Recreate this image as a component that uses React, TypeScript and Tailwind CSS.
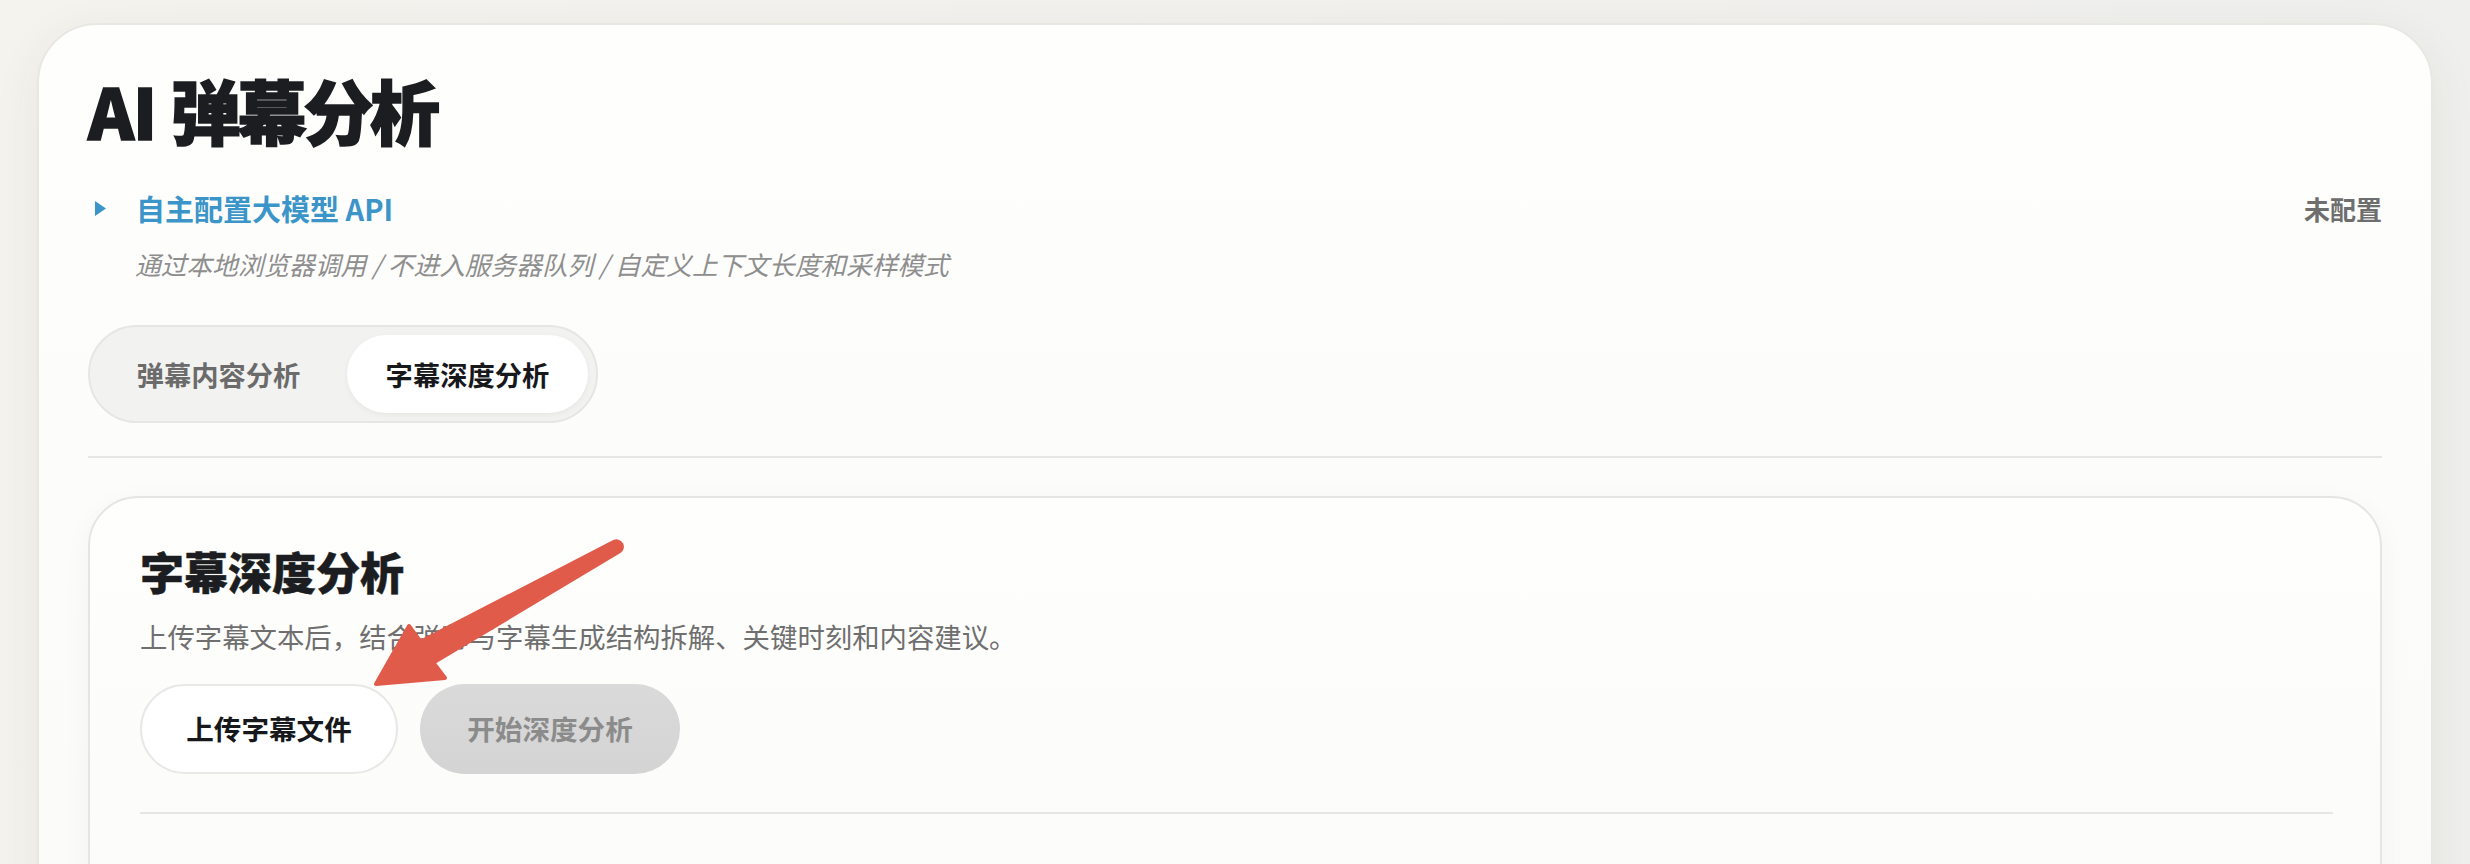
import React from 'react'

const tabs = ['弹幕内容分析', '字幕深度分析']

export default function App() {
  const active = 1

  return (
    <div className="relative min-h-screen bg-linear-to-r from-[#f5f3ee] to-[#efefed] px-[37px] pt-[23px] font-['Noto_Sans_CJK_SC','Noto_Sans',sans-serif]">
      <section className="rounded-[60px] border-2 border-[#e9e7e2] bg-linear-to-b from-[#fefefd] to-[#fafaf8] px-[49px] pt-[50px] pb-[120px] shadow-[0_12px_48px_rgba(60,50,30,0.07)]">
        <h1 className="text-[70px] leading-none font-black tracking-[-0.05em] text-[#1b1d21] [-webkit-text-stroke:1.5px_#1b1d21]">
          <span className="tracking-[-0.02em]">AI </span>弹幕分析
        </h1>

        <div className="mt-[43px] flex h-[40px] items-center justify-between">
          <button className="flex items-center gap-[30px] pl-[7px]">
            <svg width="11" height="15" viewBox="0 0 11 15">
              <polygon points="0,0 11,7.5 0,15" fill="#3b95c8" />
            </svg>
            <span className="text-[29px] leading-none font-bold text-[#3b95c8]">
              自主配置大模型 API
            </span>
          </button>
          <span className="text-[26px] font-bold text-[#6e6e6e]">未配置</span>
        </div>

        <p className="mt-[18px] pl-[47px] text-[25.7px] leading-[36px] text-[#8e8e8e] italic">
          通过本地浏览器调用 / 不进入服务器队列 / 自定义上下文长度和采样模式
        </p>

        <div className="mt-[43px] inline-flex gap-[8px] rounded-full border-2 border-[#e6e6e4] bg-[#f2f2f1] p-[8px]">
          {tabs.map((t, i) => (
            <button
              key={t}
              className={
                i === active
                  ? 'flex h-[78px] w-[241px] items-center justify-center rounded-full bg-white text-[27.3px] font-bold text-[#17181b] shadow-[0_2px_6px_rgba(0,0,0,0.05)]'
                  : 'flex h-[78px] w-[241px] items-center justify-center rounded-full text-[27.3px] font-bold text-[#6b6b6b]'
              }
            >
              {t}
            </button>
          ))}
        </div>

        <div className="mt-[33px] h-[2px] bg-[#e7e6e3]" />

        <div className="mt-[38px] rounded-[50px] border-2 border-[#e6e5e2] bg-linear-to-b from-[#fefefd] to-[#fbfbf9] pt-[51px] pr-[47px] pb-[120px] pl-[50px] shadow-[0_8px_30px_rgba(60,50,30,0.04)]">
          <h2 className="text-[44px] leading-none font-black text-[#1b1d21] [-webkit-text-stroke:0.5px_#1b1d21]">
            字幕深度分析
          </h2>
          <p className="mt-[23px] text-[27.4px] leading-[40px] text-[#6f6f6f]">
            上传字幕文本后，结合弹幕与字幕生成结构拆解、关键时刻和内容建议。
          </p>
          <div className="mt-[28px] flex gap-[22px]">
            <button className="h-[90px] w-[258px] rounded-full border-2 border-[#e8e8e6] bg-white text-[27.6px] font-bold text-[#17181b]">
              上传字幕文件
            </button>
            <button className="h-[90px] w-[260px] rounded-full bg-linear-to-b from-[#dadada] to-[#d4d4d4] text-[27.6px] font-bold text-[#8b8b8b]">
              开始深度分析
            </button>
          </div>
          <div className="mt-[38px] h-[2px] bg-[#e7e6e3]" />
        </div>
      </section>

      {/* annotation arrow */}
      <svg
        className="pointer-events-none absolute top-0 left-0"
        width="2470"
        height="864"
        viewBox="0 0 2470 864"
      >
        <path
          d="M376 684 L409 626 L420.6 641.8 L614.6 541.6 A5.5 5.5 0 0 1 619.4 551.4 L433.4 662.6 L445 678 Z"
          fill="#e05b4a"
          stroke="#e05b4a"
          strokeWidth="4"
          strokeLinejoin="round"
        />
      </svg>
    </div>
  )
}
